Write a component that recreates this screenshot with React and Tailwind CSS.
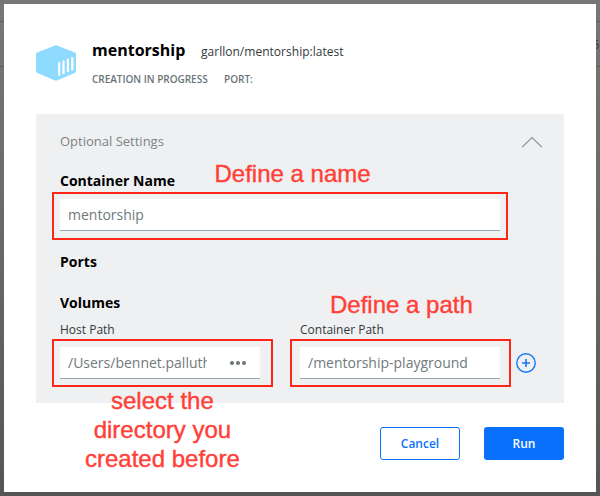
import React from "react";

function ContainerIcon() {
  return (
    <svg className="mt-[6px] h-9 w-10 shrink-0" viewBox="0 0 40 36">
      <path
        d="M19 .4Q20 0 21 .4L39 7.4Q40 7.8 40 8.8V26.4Q40 27.3 39.2 27.7L21 35.4Q20 35.8 19 35.4L.8 27.7Q0 27.3 0 26.4V8.8Q0 7.8 1 7.4Z"
        fill="#8fdaff"
      />
      <path
        d="M23.2 17.2V30.8M27.5 15.6V29M31.9 13.8V27.2M36.3 12.2V25.4"
        stroke="#fff"
        strokeWidth="2.2"
      />
    </svg>
  );
}

function Field({ value, className = "", children }) {
  return (
    <div className={`flex h-8 items-center border-b border-[#98a6b3] bg-white px-2 text-[14px] text-[#70797c] ${className}`}>
      <span className="overflow-hidden whitespace-nowrap leading-[24px]">{value}</span>
      {children}
    </div>
  );
}

function Note({ className, children }) {
  return (
    <div className={`absolute whitespace-nowrap text-center font-['Liberation_Sans',Arial,sans-serif] text-[24px] leading-[29px] text-[#ff4038] [-webkit-text-stroke:0.4px_#ff4038] ${className}`}>
      {children}
    </div>
  );
}

export default function App() {
  return (
    <div className="relative h-[496px] w-[600px] overflow-hidden bg-linear-to-b from-[#777777] via-[#696866] to-[#565555] p-1 font-['Open_Sans','Noto_Sans',sans-serif] text-black">
      <div className="absolute left-0 top-[21px] h-[46px] w-full border-y border-[#5f5f5f]" />
      <div className="absolute left-[592px] top-[32px] text-[13px] leading-6 text-[#3c4144]">5</div>

      <div className="relative h-[488px] bg-white px-8 pt-[35px]">
        <header className="flex h-[75px] gap-4">
          <ContainerIcon />
          <div>
            <div className="flex h-6 items-center">
              <h1 className="-mt-[2px] w-[109px] text-[16px] font-bold leading-6">mentorship</h1>
              <span className="pt-[2px] text-[12px] leading-5 tracking-[0.02px] text-[#33383b]">garllon/mentorship:latest</span>
            </div>
            <div className="mt-2 flex h-4 text-[10px] font-semibold leading-4 text-[#6a7478]">
              <span className="w-[132px] tracking-[-0.02px]">CREATION IN PROGRESS</span>
              <span>PORT:</span>
            </div>
          </div>
        </header>

        <section className="h-[289px] bg-[#eff0f2] px-6 pt-4">
          <div className="flex h-6 items-center justify-between text-[13px] text-[#7c8487]">
            <span>Optional Settings</span>
            <svg className="mr-[-4px] h-3 w-6" viewBox="0 0 24 12" fill="none" stroke="#8b98a4" strokeWidth="1.2">
              <path d="M2 11.2 12 1.5 22 11.2" />
            </svg>
          </div>
          <h2 className="mt-[17px] text-[14px] font-bold leading-5">Container Name</h2>
          <Field value="mentorship" className="mt-2 w-[440px]" />
          <h2 className="mt-[21px] text-[14px] font-bold leading-5">Ports</h2>
          <h2 className="mt-[21px] text-[14px] font-bold leading-5">Volumes</h2>
          <div className="mt-2 flex text-[12px] leading-[18px] text-[#33383b]">
            <span className="w-[240px]">Host Path</span>
            <span>Container Path</span>
          </div>
          <div className="mt-2 flex items-center">
            <Field value={<span className="block w-[139px] overflow-hidden">/Users/bennet.palluth</span>} className="w-[200px]">
              <span className="ml-[23px] flex gap-[2px]">
                <i className="size-[4px] rounded-full bg-[#6c7478]" />
                <i className="size-[4px] rounded-full bg-[#6c7478]" />
                <i className="size-[4px] rounded-full bg-[#6c7478]" />
              </span>
            </Field>
            <Field value="/mentorship-playground" className="ml-10 w-[200px]" />
            <svg className="ml-4 size-5" viewBox="0 0 20 20" fill="none" stroke="#1478f5">
              <circle cx="10" cy="10" r="9.2" strokeWidth="1.4" />
              <path d="M10 6v8M6 10h8" strokeWidth="1.6" />
            </svg>
          </div>
        </section>

        <footer className="mt-6 flex justify-end gap-6 text-[12px] font-semibold">
          <button className="h-[33px] w-20 rounded-[3px] border border-[#0870fa] text-[#0870fa]">Cancel</button>
          <button className="h-[33px] w-20 rounded-[3px] bg-[#0870fa] text-white">Run</button>
        </footer>
      </div>

      <div className="absolute left-[52px] top-[192px] h-12 w-[456px] border-2 border-[#ff2618]" />
      <div className="absolute left-[52px] top-[339px] h-12 w-[221px] border-2 border-[#ff2618]" />
      <div className="absolute left-[290px] top-[339px] h-12 w-[221px] border-2 border-[#ff2618]" />
      <Note className="left-[214.5px] top-[159px]">Define a name</Note>
      <Note className="left-[330px] top-[290px]">Define a path</Note>
      <Note className="left-[85px] top-[386px]">
        select the
        <br />
        directory you
        <br />
        created before
      </Note>
    </div>
  );
}
